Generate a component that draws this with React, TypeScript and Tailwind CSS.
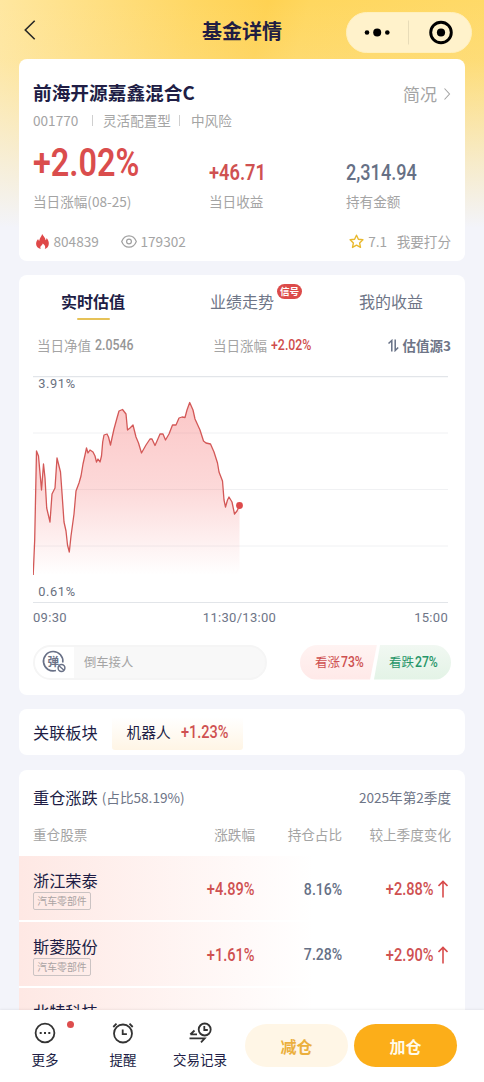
import type { ReactNode } from "react";
import clsx from "clsx";

const points: [number, number][] = [
  [33.2,575],[34.7,540],[36.5,451],[38.5,456],[41.5,490],[43.5,464],[45,478],[46.7,508],[50,522],[52,494],[55,488],[57,458],
  [60.5,472],[62,493],[64,522],[66,531],[67.5,545],[69.3,552],[71,536],[74,514],[76,491],[79,483],[81,476],[83,464],[85,455],
  [86.5,448],[88,453],[90,450],[93,452],[95,456],[96.5,462],[98,459],[100,462],[101.5,456],[102.7,442],[104,435],[107,434],
  [108.5,437],[110.5,445],[112,438],[114,429],[117,418],[119,411],[122.5,409.5],[126,414],[127.5,430],[130,428],[133,425],
  [136,437],[138.5,443],[141.5,453],[146,445],[150,439],[152,439],[155,445.5],[157,441],[160,434],[163,434],[165.5,440],
  [169,434],[172.5,425],[176,425],[179,418],[182,417],[185,417.5],[187,410],[189.7,402.5],[193,410],[195,419],[200,430],
  [203.5,441],[206,443],[210.5,444],[214,452],[217.5,463],[219,472],[222.5,481],[224,500],[225.5,507],[227.5,500],[229,497],
  [232,502],[234.5,514],[237,511],[239.5,505.5],
];

const stocks = [
  { name: "浙江荣泰", tag: "汽车零部件", change: "+4.89%", ratio: "8.16%", diff: "+2.88%" },
  { name: "斯菱股份", tag: "汽车零部件", change: "+1.61%", ratio: "7.28%", diff: "+2.90%" },
];

// condensed numerals
function Num({ children, className, right }: { children: ReactNode; className?: string; right?: boolean }) {
  return (
    <span className={clsx("inline-block whitespace-nowrap font-['Roboto',sans-serif] font-medium scale-x-[.83]", right ? "origin-right" : "origin-left", className)}>
      {children}
    </span>
  );
}

function Chart() {
  const line = points.map(([x, y]) => `${x},${y}`).join(" ");
  return (
    <svg className="block" width="415" height="228" viewBox="33 376 415 228">
      <defs>
        <linearGradient id="area" x1="0" y1="402" x2="0" y2="575" gradientUnits="userSpaceOnUse">
          <stop offset="0" stopColor="#f56c6c" stopOpacity=".38" />
          <stop offset=".5" stopColor="#f56c6c" stopOpacity=".26" />
          <stop offset="1" stopColor="#f56c6c" stopOpacity="0" />
        </linearGradient>
      </defs>
      {[433, 489.5, 546].map((y) => <path key={y} d={`M33 ${y}H448`} stroke="#f0f1f3" />)}
      <path d="M33 376.6H448M33 602.5H448" stroke="#e2e5e9" strokeWidth="1.1" />
      <polygon points={`33.2,575 ${line} 239.5,575`} fill="url(#area)" />
      <polyline points={line} fill="none" stroke="#d35857" strokeWidth="1.3" strokeLinejoin="round" />
      <circle cx="239.5" cy="505.5" r="3.4" fill="#dd4a4b" />
      <g fill="#697080" fontFamily="Roboto, sans-serif" fontSize="12.8" letterSpacing=".6">
        <text x="38.3" y="388.3">3.91%</text>
        <text x="38.3" y="596.3">0.61%</text>
      </g>
    </svg>
  );
}

function UpArrow() {
  return (
    <svg className="block" width="10" height="18" viewBox="0 0 10 18" fill="none" stroke="#d84c4c" strokeWidth="1.6">
      <path d="M5 17.5V1.5M.5 6 5 1.5 9.5 6" />
    </svg>
  );
}

function Header() {
  return (
    <header className="flex h-[59px] shrink-0 items-start">
      <div className="flex h-[59px] w-[160px] items-center pl-[24px]">
        <svg width="12" height="20" viewBox="0 0 12 20" fill="none" stroke="#272727" strokeWidth="1.6"><path d="M10.7.7 1.3 10l9.4 9.3" /></svg>
      </div>
      <h1 className="flex h-[61px] flex-1 items-center justify-center text-[20px] font-bold text-[#211d43]">基金详情</h1>
      <div className="flex w-[160px] justify-end pr-[12.5px] pt-[12px]">
        <div className="flex h-[41px] w-[126px] items-center rounded-full border border-[#fff0bd] bg-[#fff2cb]">
          <svg className="block" width="124" height="39" viewBox="0 0 124 39">
            <circle cx="20" cy="19.5" r="2.3" /><circle cx="30.2" cy="19.5" r="4" /><circle cx="40.3" cy="19.5" r="2.3" />
            <path d="M61.5 7.5v24" stroke="#e8dcb8" />
            <circle cx="94" cy="19.5" r="10.3" fill="none" stroke="#000" strokeWidth="2.9" /><circle cx="94" cy="19.5" r="4.1" />
          </svg>
        </div>
      </div>
    </header>
  );
}

function Summary() {
  return (
    <section className="h-[202px] shrink-0 rounded-[8px] bg-white px-[14px] pt-[17px]">
      <div className="flex h-[33px] items-center justify-between">
        <h2 className="text-[18.7px] font-bold text-[#201d45]">前海开源嘉鑫混合C</h2>
        <div className="flex items-center gap-[6px] pt-[2px] text-[17px] text-[#a4a4a4]">
          简况
          <svg width="8" height="12" viewBox="0 0 8 12" fill="none" stroke="#a4a4a4" strokeWidth="1.1"><path d="m1.5.5 5 5.5-5 5.5" /></svg>
        </div>
      </div>
      <div className="flex h-[23px] items-center text-[13.6px] text-[#a4a4a4]">
        <span className="w-[59px]">001770</span>
        <i className="mr-[10px] h-[11px] w-px bg-[#cfcfcf]" />
        <span className="w-[76px]">灵活配置型</span>
        <i className="mr-[11px] h-[11px] w-px bg-[#cfcfcf]" />
        <span>中风险</span>
      </div>
      <div className="mt-[9px] grid h-[50px] grid-cols-[176px_137px_1fr] items-end whitespace-nowrap">
        <Num className="justify-self-start pb-[6px] text-[39px] font-semibold leading-[44px] text-[#da4d4d]">+2.02%</Num>
        <Num className="justify-self-start text-[22px] font-semibold leading-[37px] text-[#cf5151]">+46.71</Num>
        <Num className="justify-self-start text-[21.8px] leading-[37px] text-[#667085]">2,314.94</Num>
      </div>
      <div className="grid h-[20px] grid-cols-[176px_137px_1fr] items-center text-[13.6px] leading-[18px] text-[#a4a4a4]">
        <span>当日涨幅(08-25)</span><span>当日收益</span><span>持有金额</span>
      </div>
      <div className="mt-[18px] flex h-[24px] items-center text-[13.6px] text-[#a4a4a4]">
        <svg className="ml-[3px] mr-[4.5px]" width="13" height="15" viewBox="0 0 13 15">
          <path fill="#df4848" d="M6.1 0c.9 1.8 3.2 3.4 3.5 6.2.7-.5 1-1.2 1-2.2 1.7 2 2.4 4 2.2 6-.2 2.5-1.7 4.2-4 5 1-2.2.2-3.7-2-5.5-.1 1.5-2.5 2.2-2.5 4 0 .6.2 1.1.5 1.5C2 14.3.2 12.6.1 10 0 7.500 1.200 6 2.100 4.900c.2.9.5 1.500 1.200 1.900C3.300 4 5.800 2.600 6.100 0z" />
        </svg>
        <span className="w-[67px]">804839</span>
        <svg className="mr-[4px]" width="16" height="13" viewBox="0 0 16 13" fill="none" stroke="#a0a0a0" strokeWidth="1.2">
          <path d="M.7 6.5C2.1 2.700 4.700.8 8 .8s5.900 1.900 7.300 5.700c-1.400 3.800-4 5.700-7.300 5.700S2.100 10.300.7 6.500z" /><circle cx="8" cy="6.5" r="2.4" />
        </svg>
        <span>179302</span>
        <svg className="ml-auto mr-[4px]" width="15" height="15" viewBox="0 0 15 15" fill="none" stroke="#e9b92e" strokeWidth="1.4" strokeLinejoin="round">
          <path d="m7.500 1.200 1.900 4.100 4.500.5-3.300 3.100.9 4.500-4-2.200-4 2.200.9-4.500L1.100 5.800l4.500-.5z" />
        </svg>
        <span className="w-[28.5px]">7.1</span>
        <span>我要打分</span>
      </div>
    </section>
  );
}

function Valuation() {
  return (
    <section className="mt-[14px] h-[420px] shrink-0 rounded-[8px] bg-white px-[14px]">
      <nav className="grid h-[52px] grid-cols-[120px_178px_120px] whitespace-nowrap text-center text-[16px] leading-[52px] text-[#6e7587]">
        <div className="relative font-bold text-[#201d45]">
          实时估值
          <i className="absolute left-[43.5px] top-[43px] h-[2px] w-[33px] rounded-full bg-[#e6c258]" />
        </div>
        <div className="relative">
          业绩走势
          <span className="absolute left-[124px] top-[8.5px] h-[15.5px] w-[25px] rounded-full bg-[#dc4b4a] text-[9.6px] font-bold leading-[14.5px] text-white">信号</span>
        </div>
        <div>我的收益</div>
      </nav>
      <div className="flex h-[36px] items-center pl-[4px] text-[13.5px] text-[#a4a4a4]">
        <span className="w-[58px]">当日净值</span>
        <span className="w-[118px]"><Num className="text-[14.9px] text-[#969696]">2.0546</Num></span>
        <span className="w-[58px]">当日涨幅</span>
        <Num className="text-[14.9px] text-[#cf4c4c]">+2.02%</Num>
        <svg className="ml-auto mr-[4px]" width="11" height="13" viewBox="0 0 11 13" fill="none" stroke="#667085" strokeWidth="1.5">
          <path d="M.5 4.500 3.800 1.500V12.500M7.200.5v11l3-3" />
        </svg>
        <span className="font-bold text-[#6e7587]">估值源3</span>
      </div>
      <div className="mt-[12.5px]"><Chart /></div>
      <div className="grid h-[29px] w-[415px] grid-cols-[1fr_auto_1fr] items-center font-['Roboto',sans-serif] text-[13px] tracking-[.3px] text-[#6e7587]">
        <span>09:30</span><span className="pr-[2px]">11:30/13:00</span><span className="text-right">15:00</span>
      </div>
      <div className="mt-[12px] flex h-[35px] justify-between">
        <div className="flex w-[233.5px] items-center overflow-hidden rounded-full border-2 border-[#f5f5f5] bg-[#f8f8f8]">
          <div className="flex h-full w-[39px] items-center bg-white pl-[7px]">
            <svg width="26" height="25" viewBox="0 0 26 25" fill="none" stroke="#697187">
              <path d="M20.8 12.5A9.7 9.7 0 1 0 14 20.5" strokeWidth="1.7" />
              <text x="5.500" y="16" fontSize="11.5" fontWeight="700" fontFamily="Noto Sans CJK SC, sans-serif" fill="#697187" stroke="none">弹</text>
              <circle cx="19.5" cy="18" r="3.4" strokeWidth="1.5" /><path d="m17 15.700 5 4.600" strokeWidth="1.3" />
            </svg>
          </div>
          <span className="ml-[10px] text-[12.3px] text-[#a4a4a4]">倒车接人</span>
        </div>
        <div className="flex w-[151px]">
          <div className="flex w-[77px] items-center rounded-l-full bg-gradient-to-b from-[#fff3f2] to-[#ffe9e8] pl-[15px] text-[12.5px] text-[#ce5050] [clip-path:polygon(0_0,100%_0,91%_100%,0_100%)]">
            <span className="w-[26px] shrink-0">看涨</span><Num className="text-[14.7px] font-bold">73%</Num>
          </div>
          <div className="-ml-[3px] flex w-[77px] items-center rounded-r-full bg-gradient-to-b from-[#f1f8f2] to-[#e3f3e6] pl-[15px] text-[12.5px] text-[#269568] [clip-path:polygon(8%_0,100%_0,100%_100%,0_100%)]">
            <span className="w-[26px] shrink-0">看跌</span><Num className="text-[14.7px] font-bold">27%</Num>
          </div>
        </div>
      </div>
    </section>
  );
}

function Holdings() {
  return (
    <section className="mt-[15px] h-[300px] shrink-0 overflow-hidden rounded-t-[8px] bg-white">
      <div className="flex h-[54px] items-center px-[14px] text-[#6e7587]">
        <h3 className="mr-[4px] text-[16.2px] text-[#201d45]">重仓涨跌</h3>
        <span className="text-[13.6px]">(占比58.19%)</span>
        <span className="ml-auto text-[13.6px]">2025年第2季度</span>
      </div>
      <div className="grid h-[32px] grid-cols-[100px_122px_87px_109px] px-[14px] text-right text-[13.6px] leading-[20px] text-[#a4a4a4]">
        <span className="text-left">重仓股票</span><span>涨跌幅</span><span>持仓占比</span><span>较上季度变化</span>
      </div>
      {stocks.map((s) => (
        <div key={s.name} className="grid h-[65.8px] grid-cols-[100px_122px_87px_109px] items-center border-b-2 border-white bg-gradient-to-r from-[#fee8e4] to-white to-[66%] px-[14px] text-right">
          <div className="self-start pt-[11px] text-left">
            <div className="text-[16.2px] leading-[26px] text-[#201d45]">{s.name}</div>
            <span className="-mt-px flex h-[18px] w-[58px] items-center justify-center whitespace-nowrap rounded-[2px] border border-[#cbc3c3] text-[9.9px] leading-[16px] text-[#aaa3a3]">{s.tag}</span>
          </div>
          <div className="pt-[2px]"><Num right className="text-[17.6px] text-[#cf5151]">{s.change}</Num></div>
          <div className="pt-[2px]"><Num right className="text-[17px] text-[#667085]">{s.ratio}</Num></div>
          <div className="flex items-center justify-end gap-[4px] pr-[3.5px] pt-[2px]">
            <Num right className="text-[17.6px] text-[#cf5151]">{s.diff}</Num>
            <UpArrow />
          </div>
        </div>
      ))}
      {/* next row, tucked under the action bar */}
      <div className="h-[66px] bg-gradient-to-r from-[#fee8e4] to-white to-[66%] px-[14px] pt-[10px] text-[16.2px] leading-[26px] text-[#201d45]">北特科技</div>
    </section>
  );
}

function Footer() {
  return (
    <footer className="z-10 flex h-[72px] shrink-0 bg-white text-[13.5px] text-[#201d45] shadow-[0_-1px_2px_rgba(0,0,0,.06)]">
      <div className="relative ml-[15px] flex w-[60px] flex-col items-center pt-[12px]">
        <svg width="22" height="22" viewBox="0 0 22 22" fill="none" stroke="#333" strokeWidth="1.8">
          <circle cx="11" cy="11" r="9.4" /><path d="M5.700 11h2M10 11h2M14.300 11h2" strokeWidth="2" />
        </svg>
        <span className="mt-[5px] leading-[20px]">更多</span>
        <i className="absolute left-[52px] top-[11px] h-[7px] w-[7px] rounded-full bg-[#dd4d4d]" />
      </div>
      <div className="ml-[18px] flex w-[60px] flex-col items-center pt-[12px]">
        <svg width="24" height="22" viewBox="0 0 24 22" fill="none" stroke="#333" strokeWidth="1.8">
          <circle cx="12" cy="11.500" r="9" /><path d="M11.700 7.500v4.700h4.200M2.300 5 5.500 1.700M21.700 5 18.500 1.700" />
        </svg>
        <span className="mt-[5px] leading-[20px]">提醒</span>
      </div>
      <div className="ml-[16px] flex w-[62px] flex-col items-center whitespace-nowrap pt-[12px]">
        <svg width="24" height="22" viewBox="0 0 24 22" fill="none" stroke="#333" strokeWidth="1.8">
          <circle cx="16.700" cy="7.500" r="6" /><path d="M16.300 4v4h3.500M9 12.300H2.500M2.300 12.500l4.200-4M1.500 16.300h15.200l-3.700 4" />
        </svg>
        <span className="mt-[5px] leading-[20px]">交易记录</span>
      </div>
      <div className="ml-[14px] mt-[14px] flex gap-[6px] text-[16px] font-bold">
        <button className="h-[43px] w-[103px] rounded-full bg-[#fff6e6] text-[#ebaf3d]">减仓</button>
        <button className="h-[43px] w-[103px] rounded-full bg-[#fcae19] text-[#fffbea]">加仓</button>
      </div>
    </footer>
  );
}

export default function App() {
  return (
    <div className="flex h-[1082px] w-[484px] flex-col overflow-hidden bg-[#f3f4fa] font-['Noto_Sans_CJK_SC',sans-serif]">
      <div className="flex min-h-0 flex-1 flex-col overflow-hidden bg-[linear-gradient(to_bottom,rgba(243,244,250,0)_0,rgba(243,244,250,.1)_60px,rgba(243,244,250,.65)_160px,#f3f4fa_228px),linear-gradient(105deg,#ffe7a0_0,#ffd763_190px,#ffd252_260px,#ffd75f_300px,#ffdd75_100%)]">
        <Header />
        <main className="mx-[19px] flex flex-col">
          <Summary />
          <Valuation />
          <section className="mt-[14px] flex h-[46px] shrink-0 items-center rounded-[8px] bg-white pl-[14px] text-[#201d45]">
            <h3 className="w-[79px] text-[16.2px]">关联板块</h3>
            <div className="mt-[2px] flex h-[33px] w-[131px] items-center rounded-[3px] bg-gradient-to-b from-white to-[#fff5e5] pb-[2px] pl-[14.5px]">
              <span className="w-[54.5px] text-[14.7px]">机器人</span>
              <Num className="text-[17.5px] text-[#cf5151]">+1.23%</Num>
            </div>
          </section>
          <Holdings />
        </main>
      </div>
      <Footer />
    </div>
  );
}
